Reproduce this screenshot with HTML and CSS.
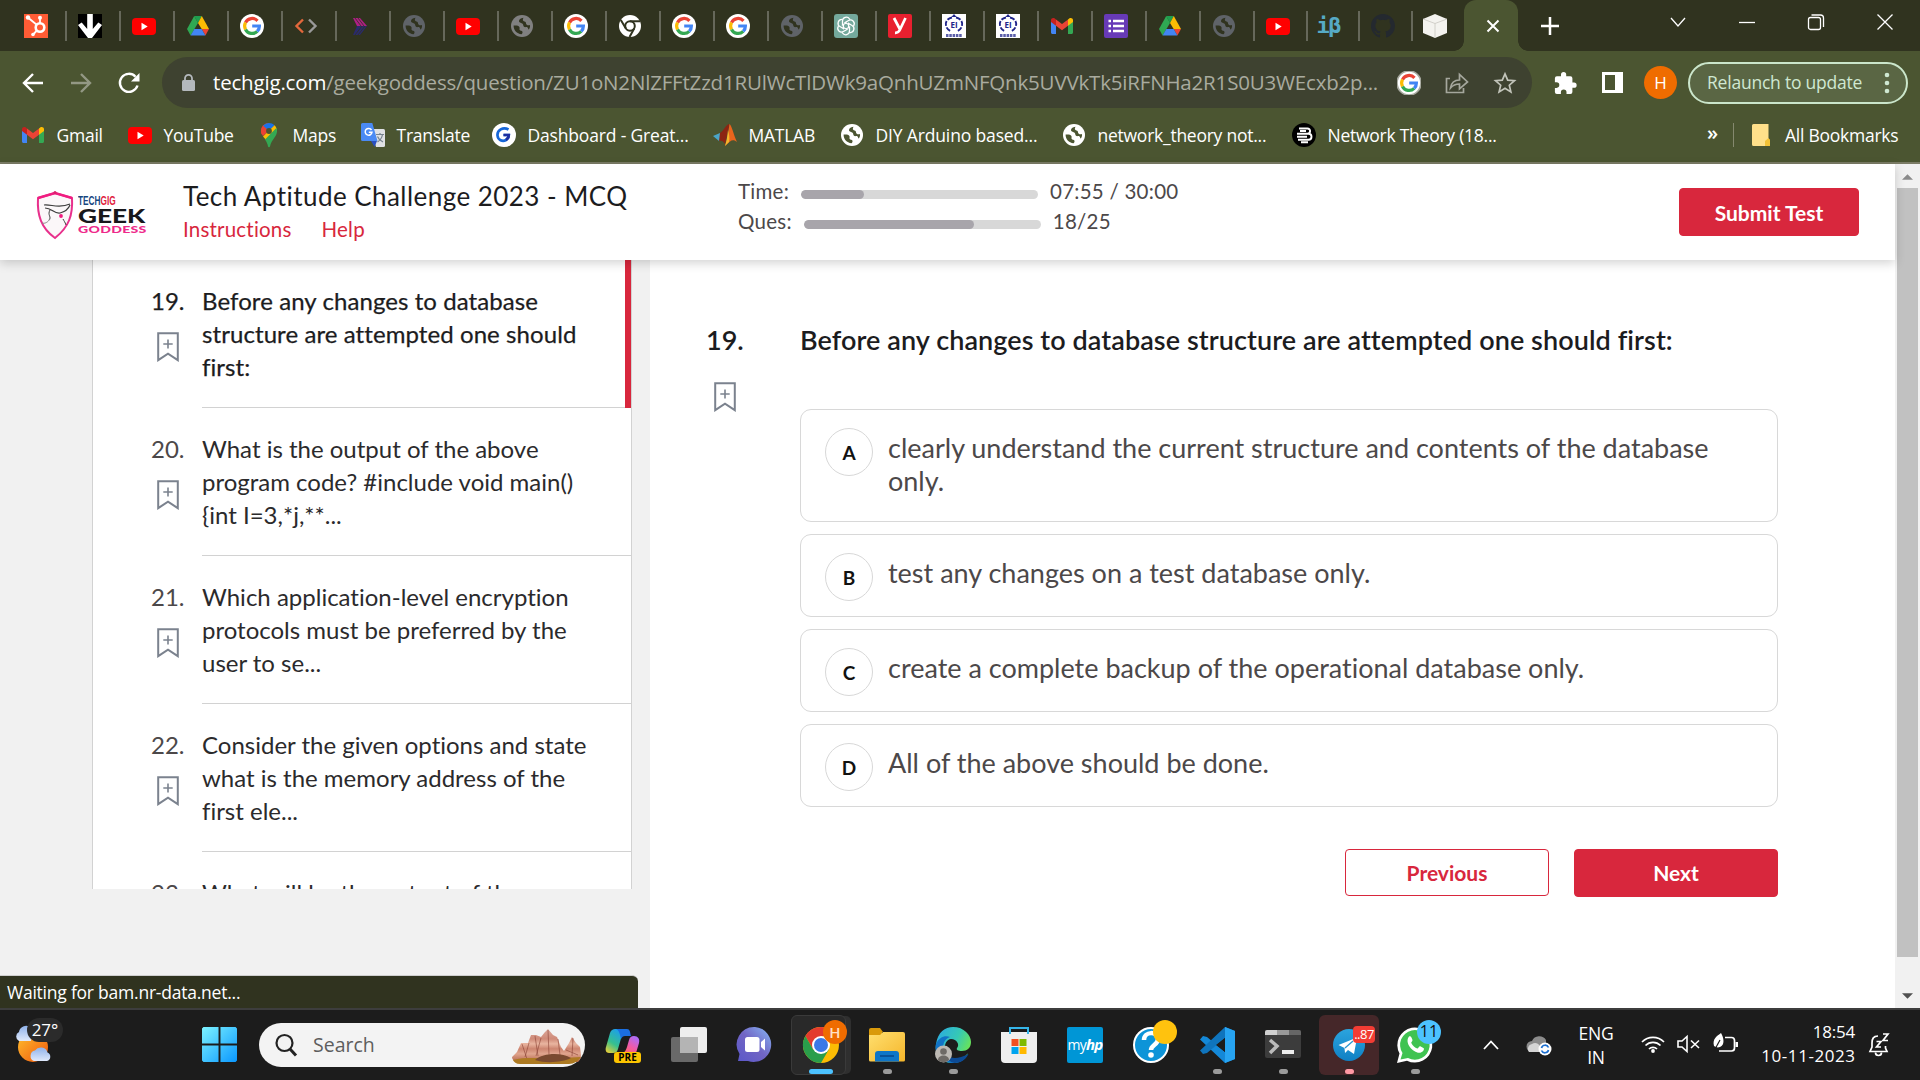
FILE: index.html
```html
<!DOCTYPE html>
<html lang="en">
<head>
<meta charset="utf-8">
<title>Tech Aptitude Challenge 2023 - MCQ</title>
<link rel="stylesheet" href="styles.css">
</head>
<body>
<svg class="defs" aria-hidden="true">
  <defs>
    <linearGradient id="win-g" x1="0" y1="0" x2="1" y2="1"><stop offset="0" stop-color="#7df3ff"/><stop offset="1" stop-color="#0a97ff"/></linearGradient>
    <linearGradient id="sun-g" x1="0" y1="0" x2="1" y2="1"><stop offset="0" stop-color="#ffc02e"/><stop offset="1" stop-color="#f0560c"/></linearGradient>
    <linearGradient id="cloud-g" x1="0" y1="0" x2="0" y2="1"><stop offset="0" stop-color="#8fb2ea"/><stop offset="1" stop-color="#dfe9fb"/></linearGradient>
    <linearGradient id="chat-g" x1="0" y1="1" x2="1" y2="0"><stop offset="0" stop-color="#5a57c9"/><stop offset=".5" stop-color="#7165c4"/><stop offset="1" stop-color="#86b7f5"/></linearGradient>
    <linearGradient id="edge-g" x1="0" y1="0" x2="1" y2=".5"><stop offset="0" stop-color="#2aa6e6"/><stop offset=".6" stop-color="#35c9b5"/><stop offset="1" stop-color="#6be455"/></linearGradient>
    <linearGradient id="folder-g" x1="0" y1="0" x2="1" y2="1"><stop offset="0" stop-color="#ffdf6f"/><stop offset="1" stop-color="#f5b62b"/></linearGradient>
    <linearGradient id="cop1" x1="0" y1="1" x2=".6" y2="0"><stop offset="0" stop-color="#ffd12e"/><stop offset=".45" stop-color="#35c08f"/><stop offset="1" stop-color="#1b9df0"/></linearGradient>
    <linearGradient id="cop2" x1="0" y1="1" x2=".6" y2="0"><stop offset="0" stop-color="#ff6a5a"/><stop offset=".5" stop-color="#f05aa8"/><stop offset="1" stop-color="#b06cf5"/></linearGradient>
    <linearGradient id="rock-g" x1="0" y1="0" x2="0" y2="1"><stop offset="0" stop-color="#dba79a"/><stop offset=".3" stop-color="#cf8a78"/><stop offset=".45" stop-color="#e9b5a0"/><stop offset=".6" stop-color="#cd8570"/><stop offset=".75" stop-color="#e0a58e"/><stop offset="1" stop-color="#b4654c"/></linearGradient>
    <linearGradient id="tg-g" x1="0" y1="0" x2="0" y2="1"><stop offset="0" stop-color="#2ba4de"/><stop offset="1" stop-color="#0f80c4"/></linearGradient>

    <symbol id="youtube" viewBox="0 0 24 24"><rect y="4" width="24" height="17" rx="4" fill="#f00"/><path d="M9.500 8.800v7.400l6.200-3.700z" fill="#fff"/></symbol>
    <symbol id="drive" viewBox="0 0 24 24"><path d="M8.200 2h7.600L12 9z" fill="#1e9e4f"/><path d="M8.200 2 1 15l3.600 6.500L12 9z" fill="#2fa853"/><path d="M15.800 2 23 15h-7.300L12 9z" fill="#fbbc04"/><path d="M23 15l-3.600 6.500L15.700 15z" fill="#ea4335"/><path d="M8.300 15h7.400l3.700 6.500H4.600z" fill="#4285f4"/></symbol>
    <symbol id="google" viewBox="0 0 24 24"><circle cx="12" cy="12" r="12" fill="#fff"/><g fill="none" stroke-width="3.200"><path d="M17.500 6.800A7.400 7.400 0 0 0 5.500 8.600" stroke="#ea4335"/><path d="M5.500 8.600a7.400 7.400 0 0 0 0 6.800" stroke="#fbbc05"/><path d="M5.500 15.400a7.400 7.400 0 0 0 11.700 2" stroke="#34a853"/><path d="M17.200 17.400A7.400 7.400 0 0 0 19.400 12H12.200" stroke="#4285f4"/></g></symbol>
    <symbol id="globe" viewBox="0 0 24 24"><circle cx="12" cy="12" r="11" fill="currentColor"/><path d="M13.500 3.800c-3 .2-4.800 1.900-4.500 3.700.3 1.500 2.500 1.400 3.600 2.300 1 .9.300 2.300 1.400 3 1.200.8 2.500-.2 3.500.6.800.7.500 1.800 1.300 2 1-1 1.400-2.600 1.200-4.300-1.200.3-2.700.3-3.500-.7-.8-1-.2-2-1.300-2.700-.8-.6-2.100-.5-2.300-1.500-.2-1.100.4-1.700.6-2.400z" fill="var(--hole)"/><path d="M3.600 11.600c-.1 4.600 3.200 8.400 7.900 8.700.9-.8 1.200-1.700 1-2.500-.4-1.200-2.400-.8-2.900-2-.4-1 .4-1.900-.2-2.900-.9-1.500-3.500-1.500-5.800-1.300z" fill="var(--hole)"/></symbol>
    <symbol id="gmail" viewBox="0 0 24 24"><path d="M1 6.200v12.300c0 .9.700 1.500 1.500 1.500H6V9.500z" fill="#4285f4"/><path d="M23 6.200v12.300c0 .9-.7 1.500-1.500 1.500H18V9.500z" fill="#34a853"/><path d="M6 5.500v6.200l6 4.500 6-4.500V5.500L12 10z" fill="#ea4335"/><path d="M1 6v2l5 3.800V5.500l-1.200-.9C3.200 3.400 1 4.500 1 6z" fill="#c5221f"/><path d="M23 6v2l-5 3.800V5.500l1.200-.9C20.800 3.400 23 4.500 23 6z" fill="#fbbc04"/></symbol>
    <symbol id="bookmark" viewBox="0 0 22 30"><path d="M1.200 1.200h19.600v27l-9.800-6.500-9.800 6.500z" fill="none" stroke="#7b828e" stroke-width="2"/><path d="M11 7.500v9M6.300 12h9.400" stroke="#7b828e" stroke-width="1.600"/></symbol>
    <symbol id="crest" viewBox="0 0 24 24"><rect width="24" height="24" fill="#fff"/><path d="M10 3.500C2 5 2 14 8.500 17M14 3.500c8 1.500 8 10.500 1.500 13.500" fill="none" stroke="#20258a" stroke-width="1.900" stroke-dasharray="5 1.500"/><path d="M9.500 3 12 0l2.500 3z" fill="#20258a"/><text x="12" y="13.500" font-size="8" font-weight="700" fill="#20258a" text-anchor="middle">EI</text><path d="M4 21.500h16" stroke="#5a5ea8" stroke-width="3" stroke-dasharray="2.500 .8"/></symbol>
  </defs>
</svg>

<header class="tabstrip">
  <div class="tab"><svg viewBox="0 0 24 24"><rect width="24" height="24" fill="#ff5c35"/><g stroke="#fff" stroke-width="1.800" fill="none"><circle cx="16" cy="13.500" r="4.300" stroke-width="2.600"/><path d="M16 9.500V4M13 11 4.500 4M13 16.500 9 20.500"/></g><g fill="#fff"><circle cx="16" cy="3.800" r="2"/><circle cx="4" cy="3.500" r="2.200"/><circle cx="9" cy="20.500" r="1.800"/></g></svg></div>
  <div class="tab"><svg viewBox="0 0 24 24"><rect width="24" height="24" fill="#000"/><path d="M9.200 0h5.600v15l5.500-6.500L24 11 14 24h-4L0 11l3.700-2.500 5.500 6.500z" fill="#fff"/></svg></div>
  <div class="tab"><svg><use href="#youtube"/></svg></div>
  <div class="tab"><svg><use href="#drive"/></svg></div>
  <div class="tab"><svg><use href="#google"/></svg></div>
  <div class="tab"><svg viewBox="0 0 24 24" fill="none" stroke-width="2.400"><path d="M9 5.500 2.500 12 9 18.500" stroke="#e2683c"/><path d="M15 5.500l6.500 6.500-6.500 6.500" stroke="#999"/></svg></div>
  <div class="tab"><svg viewBox="0 0 24 24"><path d="M5 4h7l7 8H9z" fill="#b01f86"/><path d="M9 12h10l-7 9H5z" fill="#2a2a6c"/><path d="M7 21l7-9M10 21l7-9M7 4l6 8M10 4l6 8" stroke="#30331f" stroke-width=".8"/></svg></div>
  <div class="tab dim"><svg><use href="#globe"/></svg></div>
  <div class="tab"><svg><use href="#youtube"/></svg></div>
  <div class="tab mid"><svg><use href="#globe"/></svg></div>
  <div class="tab"><svg><use href="#google"/></svg></div>
  <div class="tab"><svg viewBox="0 0 24 24"><circle cx="12" cy="12" r="11" fill="#fff"/><circle cx="12" cy="12" r="4.800" fill="none" stroke="#30331f" stroke-width="2"/><path d="M12 7.200h10M7.900 14.400 2.800 6M16.200 14.400 11.500 23" stroke="#30331f" stroke-width="2"/></svg></div>
  <div class="tab"><svg><use href="#google"/></svg></div>
  <div class="tab"><svg><use href="#google"/></svg></div>
  <div class="tab dim"><svg><use href="#globe"/></svg></div>
  <div class="tab"><svg viewBox="0 0 24 24"><rect width="24" height="24" rx="3" fill="#74a99c"/><g fill="none" stroke="#fff" stroke-width="1.300"><path id="petal" d="M12 9 8.500 11v-4a3.800 3.800 0 0 1 7-2l.5.500"/><use href="#petal" transform="rotate(60 12 12)"/><use href="#petal" transform="rotate(120 12 12)"/><use href="#petal" transform="rotate(180 12 12)"/><use href="#petal" transform="rotate(240 12 12)"/><use href="#petal" transform="rotate(300 12 12)"/></g></svg></div>
  <div class="tab"><svg viewBox="0 0 24 24"><rect width="24" height="24" rx="2" fill="#e8202f"/><path d="M6 4l5.500 10.500M17.500 4 12 15.500c-1 2.300-2 3.500-5 3.300" fill="none" stroke="#fff" stroke-width="2.700"/></svg></div>
  <div class="tab"><svg><use href="#crest"/></svg></div>
  <div class="tab"><svg><use href="#crest"/></svg></div>
  <div class="tab"><svg><use href="#gmail"/></svg></div>
  <div class="tab"><svg viewBox="0 0 24 24"><rect width="24" height="24" rx="2" fill="#673ab7"/><path d="M9 7h11M9 12h11M9 17h11" stroke="#fff" stroke-width="2.400"/><path d="M4.500 7H7M4.500 12H7M4.500 17H7" stroke="#fff" stroke-width="2.400"/></svg></div>
  <div class="tab"><svg><use href="#drive"/></svg></div>
  <div class="tab dim"><svg><use href="#globe"/></svg></div>
  <div class="tab narrow"><svg><use href="#youtube"/></svg></div>
  <div class="tab narrow ib"><b>iβ</b></div>
  <div class="tab narrow"><svg viewBox="0 0 16 16" fill="#24292f"><path d="M8 0C3.580 0 0 3.580 0 8c0 3.540 2.290 6.530 5.470 7.590.4.070.55-.17.55-.38v-1.490c-2.230.48-2.700-.94-2.700-.94-.36-.92-.89-1.170-.89-1.170-.73-.5.050-.49.050-.49.810.060 1.230.83 1.230.83.720 1.230 1.880.87 2.330.66.070-.52.280-.87.510-1.070-1.780-.2-3.640-.89-3.640-3.950 0-.87.310-1.590.82-2.150-.08-.2-.36-1.020.08-2.120 0 0 .67-.21 2.200.82a7.600 7.600 0 0 1 4 0c1.530-1.040 2.200-.82 2.200-.82.440 1.100.16 1.920.08 2.120.51.560.82 1.270.82 2.150 0 3.070-1.870 3.750-3.650 3.950.29.250.54.730.54 1.480v2.190c0 .21.150.46.550.38A8 8 0 0 0 16 8c0-4.420-3.580-8-8-8z"/></svg></div>
  <div class="tab last"><svg viewBox="0 0 24 24"><path d="M12 0l12 5v14l-12 5-12-5V5z" fill="#f4f3ef"/><path d="M12 9.500v14.500M12 9.500 0 5M12 9.500 24 5" stroke="#c9c7c0" stroke-width=".8"/></svg></div>
  <div class="tab-active"><svg viewBox="0 0 14 14"><path d="M1.500 1.500l11 11M12.500 1.500l-11 11" stroke="#fff" stroke-width="2"/></svg></div>
  <svg class="newtab" viewBox="0 0 18 18"><path d="M9 0v18M0 9h18" stroke="#fff" stroke-width="2.500"/></svg>
  <div class="winctl">
    <svg viewBox="0 0 18 18"><path d="M2 5l7 8 7-8"/></svg>
    <svg viewBox="0 0 18 18"><path d="M1 9.500h16"/></svg>
    <svg viewBox="0 0 18 18"><rect x="1.500" y="4.500" width="12" height="12" rx="2"/><path d="M4.500 2h9a3 3 0 0 1 3 3v9"/></svg>
    <svg viewBox="0 0 18 18"><path d="M1.500 1.500l15 15M16.500 1.500l-15 15"/></svg>
  </div>
</header>

<div class="toolbar">
  <div class="nav">
    <svg viewBox="0 0 24 24"><path d="M22 12H3.500M12 3l-9 9 9 9"/></svg>
    <svg class="off" viewBox="0 0 24 24"><path d="M2 12h18.500M12 3l9 9-9 9"/></svg>
    <svg viewBox="0 0 24 24"><path d="M20.500 14.500a9 9 0 1 1-2-8.800"/><path d="M22.500 2v8.500H14z" fill="#fff" stroke="none"/></svg>
  </div>
  <div class="omnibox">
    <svg class="lock" viewBox="0 0 13 17"><rect y="6" width="13" height="11" rx="1.500" fill="#b4b9bd"/><path d="M3 7V4.300a3.500 3.500 0 0 1 7 0V7" fill="none" stroke="#b4b9bd" stroke-width="1.800"/></svg>
    <span class="url"><b>techgig.com</b><span>/geekgoddess/question/ZU1oN2NlZFFtZzd1RUlWcTlDWk9aQnhUZmNFQnk5UVVkTk5iRFNHa2R1S0U3WEcxb2p...</span></span>
    <svg class="g"><use href="#google"/></svg>
    <svg class="g share" viewBox="0 0 24 24"><path d="M5 7.500H1.500v14h17V17"/><path d="M5.500 17c.8-5.500 4-8 9-8V3.500L22.500 11l-8 7v-5c-4 0-6.500 1-9 4z"/></svg>
    <svg class="g star" viewBox="0 0 24 24"><path d="M12 2.800l2.700 6.300 6.800.6-5.200 4.500 1.600 6.700-5.900-3.600-5.900 3.600 1.600-6.700-5.200-4.500 6.800-.6z"/></svg>
  </div>
  <svg class="puzzle" viewBox="0 0 22 22"><path d="M20 10.500h-1.600V6.300a2 2 0 0 0-2-2h-4.200V2.600a2.600 2.600 0 0 0-5.200 0v1.700H2.900a2 2 0 0 0-2 2v4h1.600a2.800 2.800 0 0 1 0 5.600H.9v4a2 2 0 0 0 2 2h4v-1.600a2.800 2.800 0 0 1 5.600 0V22h3.900a2 2 0 0 0 2-2v-4.200H20a2.650 2.650 0 0 0 0-5.300z" fill="#fff"/></svg>
  <span class="panel-icon"></span>
  <span class="avatar">H</span>
  <div class="relaunch"><span>Relaunch to update</span><svg viewBox="0 0 6 22"><circle cx="3" cy="3" r="2.300"/><circle cx="3" cy="11" r="2.300"/><circle cx="3" cy="19" r="2.300"/></svg></div>
</div>

<nav class="bookmarks">
  <a class="bm-gmail"><svg><use href="#gmail"/></svg>Gmail</a>
  <a class="bm-yt"><svg><use href="#youtube"/></svg>YouTube</a>
  <a class="bm-maps"><svg viewBox="0 0 24 24"><path d="M12 0a8 8 0 0 0-8 8c0 2 .6 3.500 2 5l6-5z" fill="#ea4335"/><path d="M12 0a8 8 0 0 0-6 2.700L12 8l5.500-5.700A8 8 0 0 0 12 0z" fill="#1a73e8"/><path d="M17.500 2.300 6 13.500 10 18l10-9.500c0-2.500-.8-4.500-2.500-6.200z" fill="#fbbc04"/><path d="M20 8c0 6-5.500 8-7 15.500-.3 1-1.700 1-2 0-.5-2.700-1.300-4.500-3-7L19.300 5c.5 1 .7 2 .7 3z" fill="#34a853"/><path d="M4 8a8 8 0 0 1 2-5.300L9.500 6 5 11.500C4.300 10.300 4 9.200 4 8z" fill="#ea4335"/><circle cx="12" cy="8" r="2.900" fill="#4b5531"/></svg>Maps</a>
  <a class="bm-tr"><svg viewBox="0 0 24 24"><path d="M10 6h12.500a1.500 1.500 0 0 1 1.500 1.500v15a1.500 1.500 0 0 1-1.500 1.500H15z" fill="#dfe1e4"/><path d="M10 18h6l-2.500 6z" fill="#2a4fc0"/><path d="M1.500 0h9.800L16.500 18h-15A1.500 1.500 0 0 1 0 16.500v-15A1.500 1.500 0 0 1 1.500 0z" fill="#4a8af4"/><path d="M10.500 7A3.400 3.400 0 1 0 11 9.200H7.800" fill="none" stroke="#fff" stroke-width="1.500"/><path d="M15 11.500h8M19 10v1.500M16.500 19c3-2 4.500-4.500 5-7.500M16.500 13.500c1 2.500 3 4.500 5.500 5.500" fill="none" stroke="#76828e" stroke-width="1.200"/></svg>Translate</a>
  <a class="bm-dash"><svg viewBox="0 0 24 24"><circle cx="12" cy="12" r="12" fill="#fff"/><path d="M16.500 6.500C11 3.500 5 7 5.500 12.500c.4 4.500 5 6.500 8.500 4.500 2-1.200 2.800-3 2.800-5h-5.300" fill="none" stroke="#1667d8" stroke-width="2.700"/><path d="M14 17c2-1.200 2.800-3 2.800-5h-5.300" fill="none" stroke="#1c2fa0" stroke-width="2.700"/></svg>Dashboard - Great...</a>
  <a class="bm-mat"><svg viewBox="0 0 24 24"><path d="M0 13l7-3 4 4-5 4z" fill="#4aa6c8"/><path d="M7 10c4-2 6-9 9.500-9L12 21c-1.500-3-3.500-4-6-3z" fill="#8b2413"/><path d="M16.500 1C19 3 21 13 24 19c-4-3-6-2-12 4 2-4 3-12 4.500-22z" fill="#e9651d"/><path d="M15 7c-.5 6-1.500 11-3 16l4-4c1-4 0-8-1-12z" fill="#f6b42c"/></svg>MATLAB</a>
  <a class="bm-diy"><svg><use href="#globe"/></svg>DIY Arduino based...</a>
  <a class="bm-net"><svg><use href="#globe"/></svg>network_theory not...</a>
  <a class="bm-nt"><svg viewBox="0 0 24 24"><circle cx="12" cy="12" r="12" fill="#000"/><path d="M7 5.500h8.500a2.300 2.300 0 0 1 0 5.200H5M11 10.700h5.500a3 3 0 0 1 0 6H6M8 8h6M5 13.700h10M9 19.300h7" fill="none" stroke="#fff" stroke-width="1.900"/></svg>Network Theory (18...</a>
  <span class="more">»</span>
  <a class="bm-all"><svg viewBox="0 0 18 22"><path d="M0 1.500A1.500 1.500 0 0 1 1.500 0h15v15l1.500 1v6H1.500A1.500 1.500 0 0 1 0 20.500z" fill="#ffe08a"/><path d="M13 22v-5l3.500-3 1.500 2v6z" fill="#f3c237"/></svg>All Bookmarks</a>
</nav>

<div class="viewport">
  <div class="page">
    <header class="exam-header">
      <div class="logo">
        <svg class="shield" viewBox="0 0 38 48"><path d="M19 2 2 7c-1 17 3 30 17 40C33 36 37 24 36 7z" fill="#fbf7f9" stroke="#e8308c" stroke-width="2"/><path d="M2 7l17-5 17 5" stroke="#f01c80" stroke-width="2.400" fill="none"/><circle cx="19" cy="1.500" r="1.500" fill="#d8206a"/><g fill="none" stroke="#3c3c3c" stroke-width="1.500"><path d="M8 14c7-1 15 4 26-1M9 17c7 0 9 6 15 5 4-1 8-3 10-8" stroke-width="1.200"/><path d="M14 19c-3 5 2 7-1 10" stroke-width="1"/><path d="M27 28c1 2 2 3 3 6" stroke-width="1"/></g><path d="M6 32c3 1 6-1 8-4" stroke="#888" fill="none"/><circle cx="25" cy="25" r="1.900" fill="#f01c80"/></svg>
        <div class="brand"><span class="b1">TECH<i>GIG</i></span><span class="b2">GEEK</span><span class="b3">GODDESS</span></div>
      </div>
      <div class="titles"><h1>Tech Aptitude Challenge 2023 - MCQ</h1><p><a>Instructions</a><a>Help</a></p></div>
      <div class="progress">
        <div class="prow"><label>Time:</label><span class="bar"><span style="width:26.500%"></span></span><span>07:55 / 30:00</span></div>
        <div class="prow"><label>Ques:</label><span class="bar"><span style="width:72%"></span></span><span>18/25</span></div>
      </div>
      <button class="btn submit">Submit Test</button>
    </header>
    <div class="columns">
      <aside class="sidebar">
        <ol class="qlist">
          <li class="current"><div class="qn">19.<svg><use href="#bookmark"/></svg></div><div class="qt">Before any changes to database<br>structure are attempted one should<br>first:</div></li>
          <li><div class="qn">20.<svg><use href="#bookmark"/></svg></div><div class="qt">What is the output of the above<br>program code? #include void main()<br>{int I=3,*j,**...</div></li>
          <li><div class="qn">21.<svg><use href="#bookmark"/></svg></div><div class="qt">Which application-level encryption<br>protocols must be preferred by the<br>user to se...</div></li>
          <li><div class="qn">22.<svg><use href="#bookmark"/></svg></div><div class="qt">Consider the given options and state<br>what is the memory address of the<br>first ele...</div></li>
          <li><div class="qn">23.<svg><use href="#bookmark"/></svg></div><div class="qt">What will be the output of the</div></li>
        </ol>
      </aside>
      <main class="question">
        <div class="mark"><b>19.</b><svg><use href="#bookmark"/></svg></div>
        <div class="body">
          <h2>Before any changes to database structure are attempted one should first:</h2>
          <div class="opt"><b>A</b><span>clearly understand the current structure and contents of the database<br>only.</span></div>
          <div class="opt"><b>B</b><span>test any changes on a test database only.</span></div>
          <div class="opt"><b>C</b><span>create a complete backup of the operational database only.</span></div>
          <div class="opt"><b>D</b><span>All of the above should be done.</span></div>
          <div class="actions"><button class="btn prev">Previous</button><button class="btn next">Next</button></div>
        </div>
      </main>
    </div>
  </div>
  <div class="scrollbar"><svg viewBox="0 0 12 6"><path d="M0 6h12L6 0z" fill="#8b8b8b"/></svg><span></span><svg viewBox="0 0 12 6"><path d="M0 0h12L6 6z" fill="#505050"/></svg></div>
  <div class="status">Waiting for bam.nr-data.net...</div>
</div>

<footer class="taskbar">
  <div class="weather"><svg viewBox="0 0 36 44"><circle cx="18" cy="26" r="15" fill="url(#sun-g)"/><path d="M4 20a5 5 0 0 1 0-9 7 7 0 0 1 12-4v13z" fill="url(#cloud-g)"/><path d="M19 40a5.500 5.500 0 0 1 1-10.500 7 7 0 0 1 12.500 2A4.500 4.500 0 0 1 32 40z" fill="url(#cloud-g)"/></svg><span>27°</span></div>
  <svg class="start" viewBox="0 0 36 36"><path d="M1.500 0H17v17H0V1.500zM19 0h15.500L36 1.500V17H19zM0 19h17v17H1.500L0 34.500zM19 19h17v15.500L34.500 36H19z" fill="url(#win-g)"/></svg>
  <div class="search"><svg class="mag" viewBox="0 0 22 22"><circle cx="9.500" cy="9" r="8" fill="none" stroke="#222" stroke-width="2.200"/><path d="M15 15l6 6.500" stroke="#222" stroke-width="3"/></svg><span>Search</span>
    <svg class="rocks" viewBox="0 0 72 35"><path d="M1 28l5-5 4-9 7 0 3-8h5l5 2 4-5 3-3 5 6 4 2 4 10 3 4 5-8 3-6 4 6 4 4 1 8c0 3-1 5-3 7H9c-5 0-8-2-8-5z" fill="url(#rock-g)"/><path d="M11 15l5 15M24 7l3 20M37 1l1 25M47 10l2 16M62 9l-1 18M30 9l-5 18M18 14l-4 14M55 21l12 5" stroke="#8a4335" stroke-opacity=".6" stroke-width="1"/><path d="M2 31c14-4 34 0 68-3-3 4-7 7-12 7H9c-4 0-6-2-7-4z" fill="#ad7a22"/><path d="M24 31c8-7 26-8 36-2-8 4-24 6-36 2z" fill="#7a4a30"/></svg></div>
  <div class="apps">
    <div class="app"><svg viewBox="0 0 36 36"><path d="M1 20 5 6c1-3 3-4 5-4h12c-3 1-4 3-5 6l-4 14c-1 3-2 4-5 4H4c-3 0-4-3-3-6z" fill="url(#cop1)"/><path d="M11 2h11c3 0 3 3 4 7h-6c-2 0-3 1-4 3-1-5-2-9-5-10z" fill="#1b6ee0"/><path d="M18 26c2-1 3-3 4-6l2-7c1-3 2-4 5-4 4 0 6 3 5 7l-3 10z" fill="url(#cop2)"/></svg><em class="pre">PRE</em></div>
    <div class="app"><svg viewBox="0 0 36 36"><rect x="9" y="0" width="27" height="26" rx="2" fill="#eee"/><rect x="0" y="10" width="27" height="25" rx="2" fill="#7a7a7a" fill-opacity=".82"/><path d="M9 10h18v16H9z" fill="#b4b4b4"/></svg></div>
    <div class="app"><svg viewBox="0 0 36 36"><path d="M18 0a17.500 17.500 0 1 1-7 34H1l1.500-7A17.500 17.500 0 0 1 18 0z" fill="url(#chat-g)"/><rect x="8" y="10" width="14.500" height="15" rx="2.500" fill="#fff"/><path d="M24 15l4-3.500v12L24 20z" fill="#fff"/></svg></div>
    <div class="app active"><svg viewBox="0 0 36 36"><circle cx="18" cy="18" r="18" fill="#fbbc04"/><path d="M2.400 9a18 18 0 0 1 31.200 0H18l-7.800 13.500z" fill="#e33b2e"/><path d="M2.400 9a18 18 0 0 0 15.600 27l7.800-13.500H10.200z" fill="#2a9e4b"/><circle cx="18" cy="18" r="9" fill="#fff"/><circle cx="18" cy="18" r="7" fill="#3b78e7"/></svg><em class="badge orange">H</em><i class="dot wide"></i></div>
    <div class="app"><svg viewBox="0 0 36 36"><path d="M0 3a2 2 0 0 1 2-2h9l3 4h-1v6H0z" fill="#d99a0b"/><path d="M0 8h11l3-3h20a2 2 0 0 1 2 2v26a1.500 1.500 0 0 1-1.500 1.500h-33A1.500 1.500 0 0 1 0 33z" fill="url(#folder-g)"/><path d="M6 34.500V27a3 3 0 0 1 3-3h18a3 3 0 0 1 3 3v7.500z" fill="#0f76c8"/><path d="M11 29h14" stroke="#0a4f94" stroke-width="1.800"/></svg><i class="dot"></i></div>
    <div class="app"><svg viewBox="0 0 36 36"><path d="M1 17C3 5 10 0 18 0c11 0 18 8 18 15 0 6-4 9-9 9-4 0-6-1-5-3 3-3 0-9-6-9-4 0-7 5-6 11 1 6 6 9 11 9 5 0 9-2 12-6-3 6-8 10-15 10C6 36-1 28 1 17z" fill="url(#edge-g)"/><path d="M1 17c3-7 9-9 14-7-6 2-8 8-6 14 2 7 8 9 13 8 5 0 8-2 11-5-3 6-8 9-15 9C6 36-1 27 1 17z" fill="#1173c6"/><path d="M9.500 18c-1 12 8 17 24 9-3 6-8 9-14 9C11 34 7 26 9.500 18z" fill="#0c4a95"/><circle cx="8.500" cy="27" r="8.500" fill="#bdb9b4"/><circle cx="8.500" cy="24.500" r="3.300" fill="#6e6a66"/><path d="M3 33c0-6 11-6 11 0-3 3-8 3-11 0z" fill="#6e6a66"/></svg><i class="dot"></i></div>
    <div class="app"><svg viewBox="0 0 36 36"><path d="M0 5h36v27a4 4 0 0 1-4 4H4a4 4 0 0 1-4-4z" fill="#efefef"/><path d="M9 7V1h18v6" fill="none" stroke="#35b5e9" stroke-width="2"/><path d="M10.500 12h7v7h-7z" fill="#f25022"/><path d="M18.500 12h7v7h-7z" fill="#7fba00"/><path d="M10.500 20h7v7h-7z" fill="#00a4ef"/><path d="M18.500 20h7v7h-7z" fill="#ffb900"/></svg></div>
    <div class="app"><div class="hp">my<b>hp</b></div></div>
    <div class="app"><svg viewBox="0 0 36 36"><circle cx="18" cy="18" r="17" fill="#0d94d8" stroke="#fff" stroke-width="2"/><path d="M11 13c0-9 14-9 14-1 0 6-7 6-7 11" fill="none" stroke="#fff" stroke-width="4.500"/><circle cx="18" cy="28" r="2.800" fill="#fff"/></svg><em class="badge yellow"></em></div>
    <div class="app"><svg viewBox="0 0 36 36"><path d="M26 0l10 4v28l-10 4L1 12.500 4 9l4 1 18 15z" fill="#1488d8"/><path d="M26 0v11L8 26l-4 1-3-3.500z" fill="#0f74bd"/><path d="M26 0l10 4v28l-10 4z" fill="#27a4f2"/><path d="M26 11v14l-9-7z" fill="#1c1c1c"/></svg><i class="dot"></i></div>
    <div class="app"><svg viewBox="0 0 36 36"><rect y="3" width="36" height="28" rx="2" fill="#3c3c3c"/><path d="M0 8V5a2 2 0 0 1 2-2h10v5z" fill="#cfcfcf"/><path d="M12 3h12v5H12z" fill="#999"/><path d="M24 3h10a2 2 0 0 1 2 2v3H24z" fill="#666"/><path d="M5 13l7 6-7 7" fill="none" stroke="#bbb" stroke-width="3.500"/><path d="M17 25h12" stroke="#eee" stroke-width="4"/></svg><i class="dot"></i></div>
    <div class="app alert"><svg viewBox="0 0 36 36"><circle cx="18" cy="18" r="16" fill="url(#tg-g)"/><path d="M7.500 18 26 10.500 23 27l-6-4-3 3-.5-5z" fill="#fff"/><path d="M14 21l8-7" stroke="#2a95d0" stroke-width="1.300"/></svg><em class="count">..87</em><i class="dot pink"></i></div>
    <div class="app"><svg viewBox="0 0 36 36"><path d="M0 36l2.500-9.500A17.500 17.500 0 1 1 10 33.700z" fill="#fff"/><path d="M3.500 32.500 5.500 26A14.800 14.800 0 1 1 11 31z" fill="#3fc351"/><path d="M12 9.500c1.500-1 2.500 0 3.500 3.500 0 1.500-1.500 2-1.200 3 1.500 3 3.500 4.500 6 5.500 1.200 0 1.700-2.500 3-2.200l3.500 2c.7 2-1.500 4.500-4.500 4.500C16 25.500 7 16 12 9.500z" fill="#fff"/></svg><em class="badge blue">11</em><i class="dot"></i></div>
  </div>
  <div class="tray">
    <svg class="up" viewBox="0 0 16 10"><path d="M1 9l7-7.500L15 9" fill="none" stroke="#fff" stroke-width="1.800"/></svg>
    <svg class="cloud" viewBox="0 0 26 20"><path d="M6 16a5.500 5.500 0 0 1 0-11 8 8 0 0 1 14-1v12z" fill="#8c8c8c"/><path d="M3 16a5 5 0 0 1 3-8c3-2 6-1 8 2v6z" fill="#d4d4d4"/><circle cx="19" cy="13" r="6.500" fill="#fff"/><path d="M15.500 12a3.700 3.700 0 0 1 7-.5M22.500 14a3.700 3.700 0 0 1-7 .5" fill="none" stroke="#1c6fd0" stroke-width="1.700"/></svg>
    <div class="lang">ENG<br>IN</div>
    <svg class="wifi" viewBox="0 0 24 18"><g fill="none" stroke="#fff" stroke-width="1.700"><path d="M1 7a15.500 15.500 0 0 1 22 0M4.500 10.500a10.600 10.600 0 0 1 15 0M8 14a5.700 5.700 0 0 1 8 0"/></g><circle cx="12" cy="16" r="1.900" fill="#fff"/></svg>
    <svg class="mute" viewBox="0 0 24 18"><g fill="none" stroke="#fff" stroke-width="1.600"><path d="M1 6h4l5-4.500v15L5 12H1zM14 5.500l8 7.500M22 5.500 14 13"/></g></svg>
    <svg class="batt" viewBox="0 0 25 20"><path d="M12 4.500h6.500a3 3 0 0 1 3 3V15a3 3 0 0 1-3 3H6" fill="none" stroke="#fff" stroke-width="1.700"/><path d="M22.500 9v5H25V9z" fill="#fff"/><path d="M1 13C-1 6 4 3 8 0c3 5 4 12-1 14-2 .7-4 .5-6-1z" fill="#fff"/><path d="M1 18 7 7" stroke="#1c1c1c" stroke-width="1.200"/></svg>
    <div class="clock">18:54<br><span>10-11-2023</span></div>
    <svg class="bell" viewBox="0 0 22 24"><path d="M10 4C5 4 4 7 4 11v4l-2 4.500h17L17.500 16V14" fill="none" stroke="#fff" stroke-width="1.700"/><path d="M7.500 20.500a3 3 0 0 0 6 0" fill="none" stroke="#fff" stroke-width="1.700"/><path d="M8.500 9.500h4.500l-4.500 5.500h4.500M15 2h5l-5 6.500h5" fill="none" stroke="#fff" stroke-width="1.700"/></svg>
  </div>
</footer>
</body>
</html>
```
FILE: styles.css
```css
* { box-sizing: border-box; }
body {
  margin: 0;
  width: 1920px;
  height: 1080px;
  overflow: hidden;
  display: flex;
  flex-direction: column;
  font-family: "Open Sans", "Noto Sans", sans-serif;
  font-variant-ligatures: none;
  --hole: #30331f;
}
svg { display: block; flex: none; overflow: visible; }
.defs { position: absolute; width: 0; height: 0; }
a { text-decoration: none; }

/* tab strip */
.tabstrip {
  height: 51px;
  background: #30331f;
  display: flex;
  align-items: center;
  padding-left: 13px;
  flex: none;
}
.tab {
  width: 54px;
  height: 30px;
  padding: 3px 0 0 11px;
  border-right: 2px solid #66685a;
  flex: none;
}
.tab.narrow { width: 52.500px; }
.tab.last { width: 51px; border: 0; padding-left: 10px; }
.tab svg { width: 24px; height: 24px; }
.tab.dim { color: #5f6368; }
.tab.mid { color: #808080; }
.tab.ib b {
  display: block;
  font: 700 22px/24px "DejaVu Sans Mono", monospace;
  letter-spacing: -1.500px;
  color: #56aac6;
}
.tab.ib { padding-left: 9px; }
.tab-active {
  width: 54px;
  height: 51px;
  background: #4b5531;
  border-radius: 12px 12px 0 0;
  position: relative;
  display: flex;
  align-items: center;
  justify-content: center;
  padding-left: 5px;
}
.tab-active::before, .tab-active::after {
  content: "";
  position: absolute;
  bottom: 0;
  width: 10px;
  height: 10px;
}
.tab-active::before { left: -10px; background: radial-gradient(circle at 0 0, transparent 9.500px, #4b5531 10px); }
.tab-active::after { right: -10px; background: radial-gradient(circle at 100% 0, transparent 9.500px, #4b5531 10px); }
.tab-active svg { width: 14px; height: 14px; }
.newtab { width: 18px; height: 18px; margin-left: 23px; }
.winctl { display: flex; gap: 51px; margin: -8px 0 0 auto; padding-right: 26px; }
.winctl svg { width: 18px; height: 18px; fill: none; stroke: #fff; stroke-width: 1.300; }

/* toolbar */
.toolbar { height: 63px; background: #4b5531; display: flex; align-items: center; flex: none; }
.nav { display: flex; gap: 24px; padding-left: 21px; width: 162px; }
.nav svg { width: 24px; height: 24px; fill: none; stroke: #fff; stroke-width: 2.400; }
.nav svg.off { stroke: #939884; }
.omnibox {
  width: 1370px;
  height: 51px;
  border-radius: 26px;
  background: #3e4230;
  display: flex;
  align-items: center;
  padding-left: 20px;
}
.lock { width: 13px; height: 17px; }
.url { font-size: 20.500px; letter-spacing: -.18px; margin-left: 18px; padding-bottom: 2px; width: 1184px; white-space: nowrap; color: #a9ab9f; }
.url b { font-weight: 400; color: #fff; }
.omnibox .g { width: 24px; height: 24px; margin-right: 24px; fill: none; stroke: #a5a79d; stroke-width: 1.700; }
.omnibox .star { margin: 0; stroke: #c2c4ba; }
.puzzle { width: 22px; height: 24px; margin-left: 22px; }
.panel-icon { width: 21px; height: 21px; border: solid #fff; border-width: 3px 8px 3px 3px; margin-left: 26px; }
.avatar {
  width: 33px;
  height: 33px;
  border-radius: 50%;
  background: #ef6c00;
  color: #fff;
  font-size: 17px;
  line-height: 33px;
  text-align: center;
  margin-left: 21px;
}
.relaunch {
  width: 220px;
  height: 42px;
  margin-left: 11px;
  border: 2px solid #cbe6cb;
  border-radius: 21px;
  background: #5a6644;
  color: #cfe8d2;
  display: flex;
  align-items: center;
  padding: 0 16px 0 17px;
  justify-content: space-between;
  font-size: 17.500px;
  letter-spacing: -.22px;
  white-space: nowrap;
}
.relaunch span { padding-bottom: 1px; }
.relaunch svg { width: 6px; height: 22px; fill: #cfe8d2; }

/* bookmarks */
.bookmarks {
  height: 50px;
  background: #4b5531;
  border-bottom: 2px solid #7b7c66;
  display: flex;
  align-items: center;
  padding: 0 0 7px 21px;
  flex: none;
  color: #fff;
  font-size: 17.500px;
  line-height: 22px;
  letter-spacing: -.25px;
  white-space: nowrap;
  --hole: #4b5531;
}
.bookmarks a { display: flex; align-items: center; gap: 11.500px; flex: none; }
.bookmarks svg { width: 24px; height: 24px; }
.bm-gmail { width: 107px; }
.bm-yt { width: 129px; }
.bm-maps { width: 104px; }
.bm-tr { width: 131px; }
.bm-dash { width: 221px; letter-spacing: -.17px; }
.bm-mat { width: 127px; }
.bm-diy { width: 222px; letter-spacing: -.15px; }
.bm-net { width: 230px; }
.bm-nt { width: 415px; }
.bookmarks .more { width: 26px; font-size: 20px; padding-bottom: 4px; font-weight: 600; }
.bm-all { border-left: 1px solid #85896f; padding-left: 18px; height: 24px; }
.bookmarks .bm-all { gap: 15px; }
.bm-all svg { width: 18px; height: 22px; }

/* page viewport */
.viewport { height: 844px; display: flex; position: relative; flex: none; background: #fff; }
.page { width: 1895px; display: flex; flex-direction: column; font-family: Lato, sans-serif; }
.exam-header {
  height: 96px;
  background: #fff;
  box-shadow: 0 3px 10px rgba(0, 0, 0, .18);
  position: relative;
  z-index: 1;
  display: flex;
  flex: none;
}
.logo { width: 183px; padding: 27px 0 0 36px; display: flex; gap: 4px; }
.shield { width: 38px; height: 48px; }
.brand { display: flex; flex-direction: column; padding-top: 4px; }
.brand span { display: block; white-space: nowrap; transform-origin: 0 0; }
.b1 { font: 700 12.500px/13px "Liberation Sans", sans-serif; color: #16467f; transform: scaleX(.66); height: 12px; }
.b1 i { font-style: normal; color: #e0203c; }
.b2 { font: 900 19px/18px Lato, sans-serif; color: #17171b; height: 17px; transform: scaleX(1.380); }
.b3 { font: 900 9.500px/12px Lato, sans-serif; color: #ee2a8b; letter-spacing: .2px; transform: scaleX(1.480); }
.titles { width: 555px; padding-top: 15px; }
.titles h1 { margin: 0; font-size: 26px; line-height: 34px; font-weight: 400; color: #1c1c1e; white-space: nowrap; letter-spacing: .45px; }
.titles p { margin: 4px 0 0; font-size: 20.500px; line-height: 24px; display: flex; gap: 30px; }
.titles a { color: #d8273d; letter-spacing: .2px; }
.progress { padding-top: 12px; width: 941px; color: #4c4849; font-size: 20.500px; line-height: 30px; }
.prow { display: flex; align-items: center; gap: 12px; letter-spacing: .25px; }
.bar { width: 237px; height: 9px; border-radius: 5px; background: #d8d8d8; overflow: hidden; margin-top: 7px; }
.bar span { display: block; height: 9px; border-radius: 5px; background: #a8a5ab; }
.btn {
  font: 700 21px/24px Lato, sans-serif;
  border: 1px solid #d8273d;
  border-radius: 4px;
  background: #d8273d;
  color: #fff;
  padding: 0;
  white-space: nowrap;
}
.submit { width: 180px; height: 48px; margin-top: 24px; padding-top: 1px; }

.columns { flex: 1; display: flex; min-height: 0; }
.sidebar { width: 650px; background: #f1f1f1; padding-left: 92px; }
.qlist {
  width: 540px;
  height: 629px;
  margin: 0;
  padding: 0;
  list-style: none;
  overflow: hidden;
  background: #fff;
  border: solid #d2d2d2;
  border-width: 0 1px;
  font-size: 24px;
  line-height: 33px;
}
.qlist li { height: 148px; padding-left: 58px; display: flex; }
.qlist li.current { border-right: 6px solid #d8273d; }
.qn { width: 51px; padding-top: 24px; color: #4c4849; }
.qn svg { width: 22px; height: 30px; margin: 15px 0 0 6px; }
.qt { flex: 1; padding-top: 24px; color: #2b2a2c; border-bottom: 1px solid #d2d2d2; white-space: nowrap; }
.current .qn, .current .qt { color: #1c1c1e; -webkit-text-stroke: .25px #1c1c1e; }
.current .qt { letter-spacing: .08px; }

.question { width: 1245px; padding: 64px 0 0 56px; display: flex; background: #fff; }
.mark { width: 94px; font-size: 27px; line-height: 31px; color: #1c1c1e; }
.mark svg { width: 22px; height: 30px; margin: 27px 0 0 8px; }
.body { width: 978px; }
.body h2 { margin: 0 0 54px; font-size: 27px; line-height: 31px; font-weight: 600; color: #1c1c1e; white-space: nowrap; letter-spacing: .08px; }
.mark b { font-weight: 600; }
.opt {
  border: 1px solid #d8d8d8;
  border-radius: 11px;
  padding: 18px 24px 15px;
  margin-bottom: 12px;
  display: flex;
  gap: 15px;
  font-size: 27px;
  line-height: 33px;
  color: #4c4849;
  white-space: nowrap;
}
.opt b {
  width: 48px;
  height: 48px;
  border: 1px solid #d8d8d8;
  border-radius: 50%;
  font-size: 19px;
  line-height: 48px;
  text-align: center;
  color: #111;
}
.opt span { padding: 3px 0 9px; }
.actions { display: flex; justify-content: flex-end; gap: 25px; padding-top: 30px; }
.actions .btn { width: 204px; height: 48px; }
.actions .prev { background: #fff; color: #d8273d; height: 47px; }

.scrollbar { width: 25px; background: #f1f1f1; display: flex; flex-direction: column; align-items: center; padding: 10px 0 9px; }
.scrollbar svg { width: 11px; height: 6px; }
.scrollbar span { width: 21px; height: 769px; background: #c1c1c1; margin: 8px 0 36px; }
.status {
  position: absolute;
  left: 0;
  bottom: 0;
  width: 638px;
  height: 33px;
  background: #30331f;
  border-top: 1px solid #cfcfcf;
  border-top-right-radius: 6px;
  color: #fff;
  font-size: 17.500px;
  line-height: 33px;
  padding-left: 7px;
  letter-spacing: -.23px;
}

/* taskbar */
.taskbar { height: 72px; background: #1c1c1c; border-top: 2px solid #3d3d3d; display: flex; align-items: center; flex: none; color: #fff; }
.weather { width: 202px; display: flex; padding: 0 0 0 15px; }
.weather svg { width: 36px; height: 44px; margin-top: -5px; }
.weather span {
  width: 36px;
  height: 24px;
  margin: -8px 0 0 -24px;
  border-radius: 12px;
  background: #2b2b2b;
  font-size: 17px;
  line-height: 24px;
  text-align: center;
}
.start { width: 35px; height: 35px; margin-top: -1px; }
.search { width: 326px; height: 44px; margin: -1px 0 0 22px; border-radius: 22px; background: #f3f3f3; display: flex; align-items: center; padding-left: 16px; }
.mag { width: 22px; height: 22px; }
.search span { color: #5d5d5d; font-size: 19.500px; margin-left: 16px; width: 198px; padding-bottom: 1px; }
.rocks { width: 72px; height: 35px; margin-top: 4px; }
.apps { display: flex; margin-left: 5px; }
.app { width: 66px; height: 60px; position: relative; display: flex; justify-content: center; padding-top: 12px; }
.app svg { width: 36px; height: 36px; }
.app em, .app .dot { position: absolute; font-style: normal; }
.pre { left: 24px; top: 37px; width: 27px; height: 11px; border-radius: 3px; background: #fdc500; color: #000; font: 700 10px/11px "Open Sans", sans-serif; text-align: center; }
.app.active::before {
  content: "";
  position: absolute;
  inset: 0 8px 0 3px;
  border: 1px solid #3a3a3a;
  border-radius: 6px;
  background: #292929;
  box-shadow: 6px 0 0 -1px #2f2f2f;
}
.app.active svg { position: relative; }
.alert::before { content: ""; position: absolute; inset: 0 3px; border-radius: 6px; background: #452729; }
.alert svg { position: relative; }
.badge { right: 7px; top: 5px; width: 24px; height: 24px; border-radius: 50%; text-align: center; font-size: 15px; line-height: 24px; }
.orange { background: #ef6c00; color: #ffe0c5; font-weight: 600; }
.yellow { background: #ffc20e; }
.blue { background: #4cc2ff; color: #111; font-size: 16px; line-height: 23px; }
.count { left: 37px; top: 11px; width: 22px; height: 17px; border-radius: 4px; background: #f23c34; font-size: 13px; line-height: 17px; letter-spacing: -.5px; text-align: center; }
.dot { left: 29px; bottom: 1px; width: 9px; height: 5px; border-radius: 3px; background: #9b9b9b; }
.dot.wide { left: 21px; width: 24px; background: #4cc2ff; }
.dot.pink { background: #ff99a4; }
.hp { width: 36px; height: 36px; border-radius: 2px; background: #0096d6; font: 14px/34px "Open Sans", sans-serif; letter-spacing: -.8px; text-align: center; }
.hp b { font-style: italic; font-size: 15px; }
.tray { display: flex; align-items: center; font-size: 17px; line-height: 24px; letter-spacing: -.2px; }
.up { width: 16px; height: 10px; margin-left: 35px; }
.cloud { width: 26px; height: 20px; margin: 2px 0 0 27px; }
.lang { width: 46px; margin-left: 21px; padding-bottom: 1px; text-align: center; font-size: 17.500px; }
.wifi { width: 24px; height: 18px; margin-left: 22px; margin-top: -2px; }
.mute { width: 24px; height: 18px; margin-left: 12px; margin-top: -2px; }
.batt { width: 25px; height: 20px; margin: -4px 0 0 12px; }
.clock { width: 117px; text-align: right; padding-bottom: 2px; }
.clock span { letter-spacing: .55px; margin-right: -.5px; }
.bell { width: 22px; height: 24px; margin: -3px 0 0 13px; }
```
